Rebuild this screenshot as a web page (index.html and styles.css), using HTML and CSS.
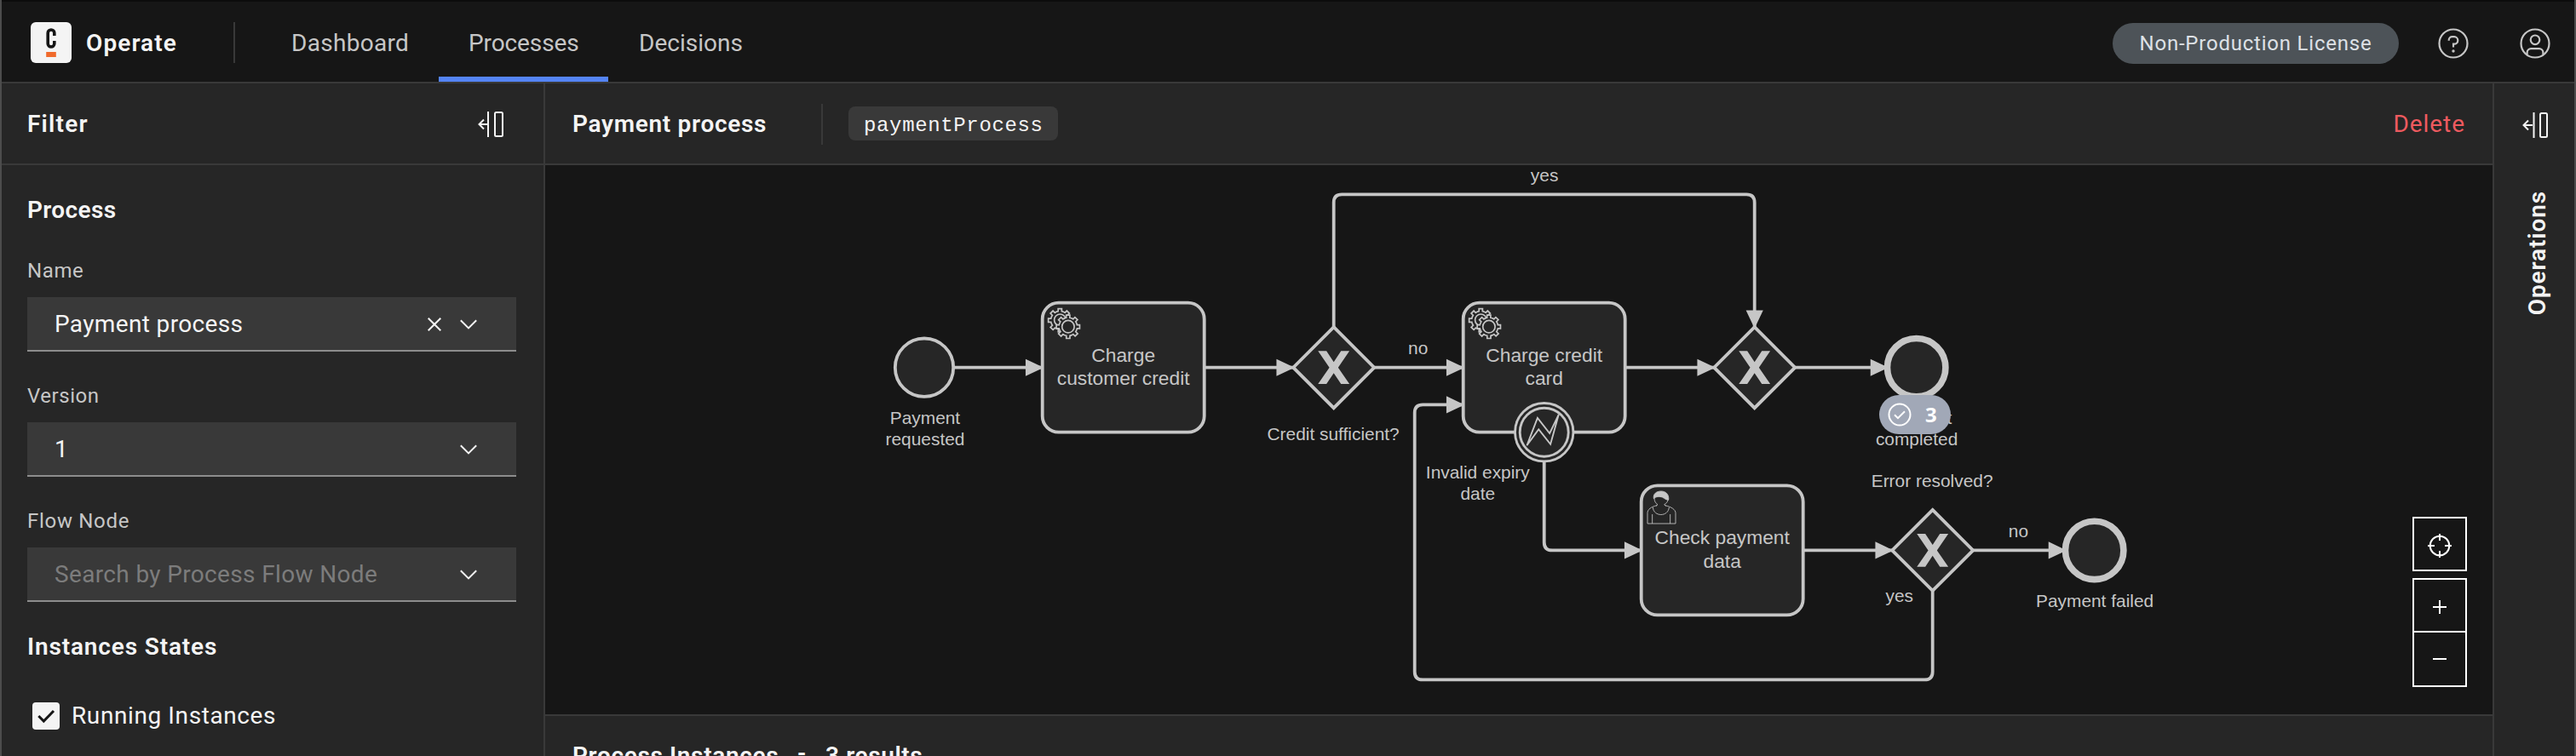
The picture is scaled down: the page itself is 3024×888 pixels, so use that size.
FILE: index.html
```
<!DOCTYPE html>
<html lang="en">
<head>
<meta charset="utf-8">
<title>Operate</title>
<link rel="stylesheet" href="styles.css">
</head>
<body>
<div class="app">
  <header class="topbar">
    <svg class="logo" viewBox="0 0 48 48" width="48" height="48">
      <rect width="48" height="48" rx="6" fill="#f4f4f4"/>
      <path d="M27.8 16v-3.2a3.8 3.8 0 0 0-7.6 0v12.4a3.8 3.8 0 0 0 7.6 0V22" fill="none" stroke="#161616" stroke-width="3.6"/>
      <rect x="18.2" y="35" width="11.6" height="6" fill="#f06a2c"/>
    </svg>
    <span class="brand">Operate</span>
    <span class="divider"></span>
    <nav class="nav">
      <a class="nav-item dash">Dashboard</a>
      <a class="nav-item proc active">Processes</a>
      <a class="nav-item dec">Decisions</a>
    </nav>
    <span class="license">Non-Production License</span>
    <svg class="round-icon" viewBox="0 0 36 36" width="36" height="36">
      <circle cx="18" cy="18" r="16.5"/>
      <path d="M12.7 14.8v-.6a4 4 0 0 1 4-4h2.4a4.2 4.2 0 0 1 0 8.4H18v4"/>
      <circle cx="18" cy="27" r="1.7" class="solid"/>
    </svg>
    <svg class="round-icon" viewBox="0 0 36 36" width="36" height="36">
      <circle cx="18" cy="18" r="16.5"/>
      <circle cx="18" cy="13.8" r="5.3"/>
      <path d="M8.6 31v-2.2a4.6 4.6 0 0 1 4.6-4.6h9.6a4.6 4.6 0 0 1 4.6 4.6V31"/>
    </svg>
  </header>

  <div class="body">
    <aside class="filters">
      <div class="panel-head">
        <h2 class="filter-title">Filter</h2>
        <svg class="collapse" viewBox="0 0 30 30" width="30" height="30"><path d="M12 0v30M12 15H2M7 9.5L1.5 15 7 20.5"/><rect x="20" y="1" width="9" height="28" rx="1.5"/></svg>
      </div>
      <div class="filter-body">
        <h3 class="section process-title">Process</h3>
        <label class="label name">Name</label>
        <div class="field">
          <span class="value">Payment process</span>
          <svg class="clear" viewBox="0 0 16 16" width="16" height="16"><path d="M.7.7l14.6 14.6M15.3.7L.7 15.3"/></svg>
          <svg class="chevron" viewBox="0 0 20 12" width="20" height="12"><path d="M.8 1.2L10 10.4l9.2-9.2"/></svg>
        </div>
        <label class="label version">Version</label>
        <div class="field">
          <span class="value">1</span>
          <svg class="chevron" viewBox="0 0 20 12" width="20" height="12"><path d="M.8 1.2L10 10.4l9.2-9.2"/></svg>
        </div>
        <label class="label flow">Flow Node</label>
        <div class="field">
          <span class="value placeholder">Search by Process Flow Node</span>
          <svg class="chevron" viewBox="0 0 20 12" width="20" height="12"><path d="M.8 1.2L10 10.4l9.2-9.2"/></svg>
        </div>
        <h3 class="section states-title">Instances States</h3>
        <div class="check-row">
          <svg viewBox="0 0 32 32" width="32" height="32"><rect width="32" height="32" rx="4" fill="#f4f4f4"/><path d="M7.3 16l6 6L25 10" fill="none" stroke="#161616" stroke-width="3"/></svg>
          <span>Running Instances</span>
        </div>
      </div>
    </aside>

    <main class="main">
      <div class="panel-head main-head">
        <h2 class="main-title">Payment process</h2>
        <span class="divider"></span>
        <code class="tag">paymentProcess</code>
        <a class="delete">Delete</a>
      </div>
      <div class="canvas">
        <svg class="diagram" viewBox="640 194 2286 645" width="2286" height="645">
          <defs>
            <marker id="arrow" markerUnits="userSpaceOnUse" markerWidth="12" markerHeight="12" refX="11" refY="6" orient="auto">
              <path d="M.6.7L11.8 6 .6 11.3z" fill="#c6c6c6"/>
            </marker>
            <path id="cog" d="m 0,0 v -1.71335 c 0.352326,-0.0705 0.703932,-0.17838 1.047628,-0.32133 0.344416,-0.14465 0.665822,-0.32133 0.966377,-0.52145 l 1.19431,1.18005 1.567487,-1.57688 -1.195028,-1.18014 c 0.403376,-0.61394 0.683079,-1.29908 0.825447,-2.01824 l 1.622133,-0.01 v -2.2196 l -1.636514,0.01 c -0.07333,-0.35153 -0.178319,-0.70024 -0.323564,-1.04372 -0.145244,-0.34406 -0.321407,-0.6644 -0.522735,-0.96217 l 1.131035,-1.13631 -1.583305,-1.56293 -1.129598,1.13589 c -0.614052,-0.40108 -1.302883,-0.68093 -2.022633,-0.82247 l 0.0093,-1.61852 h -2.241173 l 0.0042,1.63124 c -0.353763,0.0736 -0.705369,0.17977 -1.049785,0.32371 -0.344415,0.14437 -0.665102,0.32092 -0.9635006,0.52006 l -1.1698628,-1.15823 -1.5667691,1.5792 1.1684265,1.15669 c -0.4026573,0.61283 -0.68308,1.29797 -0.8247287,2.01713 l -1.6588041,0.003 v 2.22174 l 1.6724648,-0.006 c 0.073327,0.35077 0.1797598,0.70243 0.3242851,1.04472 0.1452428,0.34448 0.3214064,0.6644 0.5227339,0.96066 l -1.1993431,1.19723 1.5840256,1.56011 1.1964668,-1.19348 c 0.6140517,0.40346 1.3028827,0.68232 2.0233517,0.82331 l 7.19e-4,1.69892 z"/>
            <g id="cogs" class="cogs">
              <use href="#cog" x="12" y="18"/>
              <circle cx="10.9" cy="10.6" r="3.6"/>
              <use href="#cog" x="17" y="22"/>
              <circle cx="15.9" cy="14.7" r="3.8"/>
            </g>
            <g id="gateway">
              <path class="shape" d="M0-25L25 0 0 25-25 0z"/>
              <path fill="#c6c6c6" d="M-9.7-10.2h5.2L0-3.4l4.5-6.8h5.2L2.7 0l7 10.2H4.5L0 3.4l-4.5 6.8h-5.2l7-10.2z"/>
            </g>
          </defs>
          <g transform="translate(1085 431.7) scale(1.9)">
            <circle class="shape" r="18"/>
            <rect class="shape" x="73" y="-40" width="100" height="80" rx="10"/>
            <rect class="shape" x="333" y="-40" width="100" height="80" rx="10"/>
            <rect class="shape" x="443" y="73" width="100" height="80" rx="10"/>
            <use href="#cogs" x="73" y="-40"/>
            <use href="#cogs" x="333" y="-40"/>
            <g class="user" transform="translate(443 73) scale(.17544) translate(-20.1 -571.2)">
              <path d="M75 641C55 646 42 655 42 668V705H141V668C141 655 125 646 104 641M61 648C64 682 115 682 118 648M59 672V705M122 672V705M66 615C66 626 71 634 78 638L72 643M115 615C115 626 109 634 101 638L107 643"/>
              <path class="hair" d="M64 617C61 600 74 591 90 591S119 602 116 622C108 622 102 616 94 612C84 609 72 609 64 617z"/>
            </g>
            <use href="#gateway" x="253"/>
            <use href="#gateway" x="513"/>
            <use href="#gateway" x="623" y="113"/>
            <circle class="shape end" cx="613" r="18"/>
            <circle class="shape end" cx="723" cy="113" r="18"/>
            <g class="edges">
              <path d="M18 0H73"/>
              <path d="M173 0H228"/>
              <path d="M278 0H333"/>
              <path d="M433 0H488"/>
              <path d="M538 0H595"/>
              <path d="M253-25V-102Q253-107 258-107H508Q513-107 513-102V-25"/>
              <path d="M383 58V108Q383 113 388 113H443"/>
              <path d="M543 113H598"/>
              <path d="M648 113H705"/>
              <path d="M623 138V188Q623 193 618 193H308Q303 193 303 188V28Q303 23 308 23H333"/>
            </g>
            <g class="boundary" transform="translate(383 40)">
              <circle r="18"/>
              <circle r="15"/>
              <path d="M-10.7 8.2L-4.1-8.8 3.4.7 9-11 3.9 7.4-3.4-1.8z"/>
            </g>
            <g class="task-label">
              <text x="123" y="-3.5">Charge</text>
              <text x="123" y="10.8">customer credit</text>
              <text x="383" y="-3.5">Charge credit</text>
              <text x="383" y="10.8">card</text>
              <text x="493" y="109.2">Check payment</text>
              <text x="493" y="123.6">data</text>
            </g>
            <g class="node-label">
              <text x=".5" y="34.8">Payment</text>
              <text x=".5" y="47.9">requested</text>
              <text x="252.7" y="44.8">Credit sufficient?</text>
              <text x="305.1" y="-8.2">no</text>
              <text x="383.2" y="-115.2">yes</text>
              <text x="342" y="68.7">Invalid expiry</text>
              <text x="342" y="82">date</text>
              <text x="613.2" y="34.8">Payment</text>
              <text x="613.2" y="48">completed</text>
              <text x="622.7" y="73.8">Error resolved?</text>
              <text x="676" y="104.8">no</text>
              <text x="602.5" y="144.8">yes</text>
              <text x="723.2" y="148">Payment failed</text>
            </g>
          </g>
        </svg>
        <div class="badge">
          <svg viewBox="0 0 28 28" width="28" height="28"><circle cx="14" cy="14" r="12.5"/><path d="M8 14.2l4 4 8-8"/></svg>
          <span>3</span>
        </div>
        <div class="controls">
          <button class="ctl"><svg viewBox="0 0 28 28" width="28" height="28"><circle cx="14" cy="14" r="11.3"/><path d="M14 0v8M14 20v8M0 14h8M20 14h8"/></svg></button>
          <div class="zoom">
            <button class="ctl"><svg viewBox="0 0 16 16" width="16" height="16"><path d="M8 0v16M0 8h16"/></svg></button>
            <button class="ctl"><svg viewBox="0 0 16 16" width="16" height="16"><path d="M0 8h16"/></svg></button>
          </div>
        </div>
      </div>
      <div class="instances"><span class="inst-title">Process Instances</span><span class="dash-sep">-</span><span class="results">3 results</span></div>
    </main>

    <aside class="operations">
      <svg class="collapse" viewBox="0 0 30 30" width="30" height="30"><path d="M13.5 0v30M12 15H2M7 9.5L1.5 15 7 20.5"/><rect x="21" y="1" width="8" height="28" rx="1.5"/></svg>
      <span class="vertical">Operations</span>
    </aside>
  </div>
</div>
</body>
</html>
```
FILE: styles.css
```
* { box-sizing: border-box; }
body {
  margin: 0;
  background: #161616;
  color: #f4f4f4;
  font: 400 28px/36px Roboto, sans-serif;
}
h2, h3 { margin: 0; font-size: 28px; line-height: 36px; font-weight: 600; }
svg { display: block; flex: none; }
.app {
  width: 3024px;
  height: 888px;
  display: flex;
  flex-direction: column;
  overflow: hidden;
  border-left: 2px solid #4c4c4c;
  border-right: 2px solid #4c4c4c;
}

/* Top bar */
.topbar {
  height: 98px;
  flex: none;
  display: flex;
  align-items: center;
  padding: 0 28px 0 34px;
  border-top: 2px solid #0c0c0c;
  border-bottom: 2px solid #393939;
}
.logo { margin-top: 2px; }
.brand { width: 173px; margin-left: 17px; padding-top: 4px; font-weight: 600; letter-spacing: 1.1px; }
.divider { width: 2px; height: 48px; flex: none; background: #393939; }
.topbar .divider { margin-top: 2px; }
.nav { display: flex; height: 94px; flex: 1; margin-left: 31px; }
.nav-item { padding: 31px 0 0 35px; color: #c6c6c6; border-bottom: 6px solid transparent; }
.dash { width: 208px; letter-spacing: .3px; }
.proc { width: 199px; letter-spacing: -.1px; }
.dec { padding-left: 36px; }
.nav-item.active { border-color: #5484f5; }
.license {
  width: 336px;
  height: 48px;
  margin-top: 4px;
  border-radius: 24px;
  background: #4d5358;
  color: #dde1e6;
  font-size: 24px;
  line-height: 49px;
  text-align: center;
  letter-spacing: .78px;
}
.round-icon { margin: 4px 0 0 46px; fill: none; stroke: #c6c6c6; stroke-width: 2.2; }
.round-icon + .round-icon { margin-left: 60px; }
.round-icon .solid { fill: #c6c6c6; stroke: none; }

/* Columns */
.body { flex: 1; display: flex; min-height: 0; background: #262626; }
.panel-head { height: 96px; flex: none; display: flex; align-items: center; border-bottom: 2px solid #393939; }
.collapse { fill: none; stroke: #f4f4f4; stroke-width: 2; }

.filters { width: 638px; flex: none; border-right: 2px solid #393939; }
.filters .panel-head { justify-content: space-between; padding: 2px 47px 0 30px; }
.filter-title { letter-spacing: 1.2px; }
.filter-body { padding: 35px 32px 0 30px; }
.section { height: 36px; }
.process-title { letter-spacing: .35px; }
.label { display: block; height: 32px; margin: 0 0 15px; font-size: 24px; line-height: 32px; color: #c6c6c6; }
.name { letter-spacing: .6px; margin-top: 37px; }
.version { letter-spacing: .55px; }
.flow { letter-spacing: .7px; }
.field + .label { margin-top: 36px; }
.field {
  height: 64px;
  display: flex;
  align-items: center;
  padding: 2px 46px 0 32px;
  background: #393939;
  border-bottom: 2px solid #8d8d8d;
}
.value { flex: 1; letter-spacing: .35px; }
.placeholder { color: #7c7c7c; }
.clear, .chevron { fill: none; stroke: #f4f4f4; stroke-width: 2; }
.clear { margin-right: 22px; }
.states-title { margin-top: 35px; letter-spacing: .85px; }
.check-row { display: flex; align-items: center; gap: 14px; margin: 45px 0 0 6px; letter-spacing: .6px; }

.main { width: 2286px; flex: none; display: flex; flex-direction: column; }
.main-head { padding: 2px 32px 0 32px; }
.main-title { width: 292px; letter-spacing: .7px; }
.tag {
  width: 246px;
  height: 40px;
  margin: -2px auto 0 30px;
  padding-left: 18px;
  border-radius: 8px;
  background: #393939;
  font: 24px/45px "Liberation Mono", monospace;
  letter-spacing: .64px;
}
.delete { color: #ee5a5f; letter-spacing: .95px; }

/* Diagram */
.canvas { position: relative; height: 645px; flex: none; background: #161616; }
.shape { fill: #262626; stroke: #c6c6c6; stroke-width: 2; }
.end { stroke-width: 4; }
.edges path { fill: none; stroke: #c6c6c6; stroke-width: 2; marker-end: url(#arrow); }
.boundary { fill: #262626; stroke: #c6c6c6; stroke-width: 1.5; }
.boundary path { stroke-width: 1; }
.cogs { fill: #262626; stroke: #c6c6c6; stroke-width: .9; }
.user { fill: none; stroke: #c6c6c6; stroke-width: 2.6; }
.user .hair { fill: #c6c6c6; }
.task-label, .node-label { fill: #c6c6c6; text-anchor: middle; font-family: "Liberation Sans", Arial, sans-serif; }
.task-label { font-size: 12px; }
.node-label { font-size: 11px; }
.badge {
  position: absolute;
  left: 1566px;
  top: 270px;
  width: 84px;
  height: 46px;
  display: flex;
  align-items: center;
  gap: 16px;
  padding-left: 10px;
  border-radius: 23px;
  background: #a1a8b7;
  color: #fff;
  font: 700 24px/46px "Open Sans", sans-serif;
}
.badge svg { fill: none; stroke: #fff; stroke-width: 2; }
.controls { position: absolute; right: 30px; bottom: 32px; }
.ctl {
  width: 64px;
  height: 64px;
  display: flex;
  align-items: center;
  justify-content: center;
  padding: 4px 0 0;
  border: 2px solid #fff;
  background: #161616;
}
.ctl svg { fill: none; stroke: #fff; stroke-width: 2; }
.zoom { margin-top: 8px; }
.zoom .ctl + .ctl { height: 66px; margin-top: -2px; padding: 0; }

.instances { flex: 1; padding: 29px 0 0 32px; border-top: 2px solid #393939; font-weight: 600; white-space: nowrap; }
.inst-title { display: inline-block; width: 264px; letter-spacing: .65px; }
.dash-sep { display: inline-block; width: 33px; line-height: 24px; vertical-align: 3px; }
.results { letter-spacing: .6px; }

.operations { flex: 1; display: flex; flex-direction: column; align-items: center; border-left: 2px solid #393939; padding: 34px 0 0 2px; }
.vertical { margin: 62px 0 0 5px; writing-mode: vertical-rl; transform: rotate(180deg); font-weight: 600; letter-spacing: .9px; }
```
